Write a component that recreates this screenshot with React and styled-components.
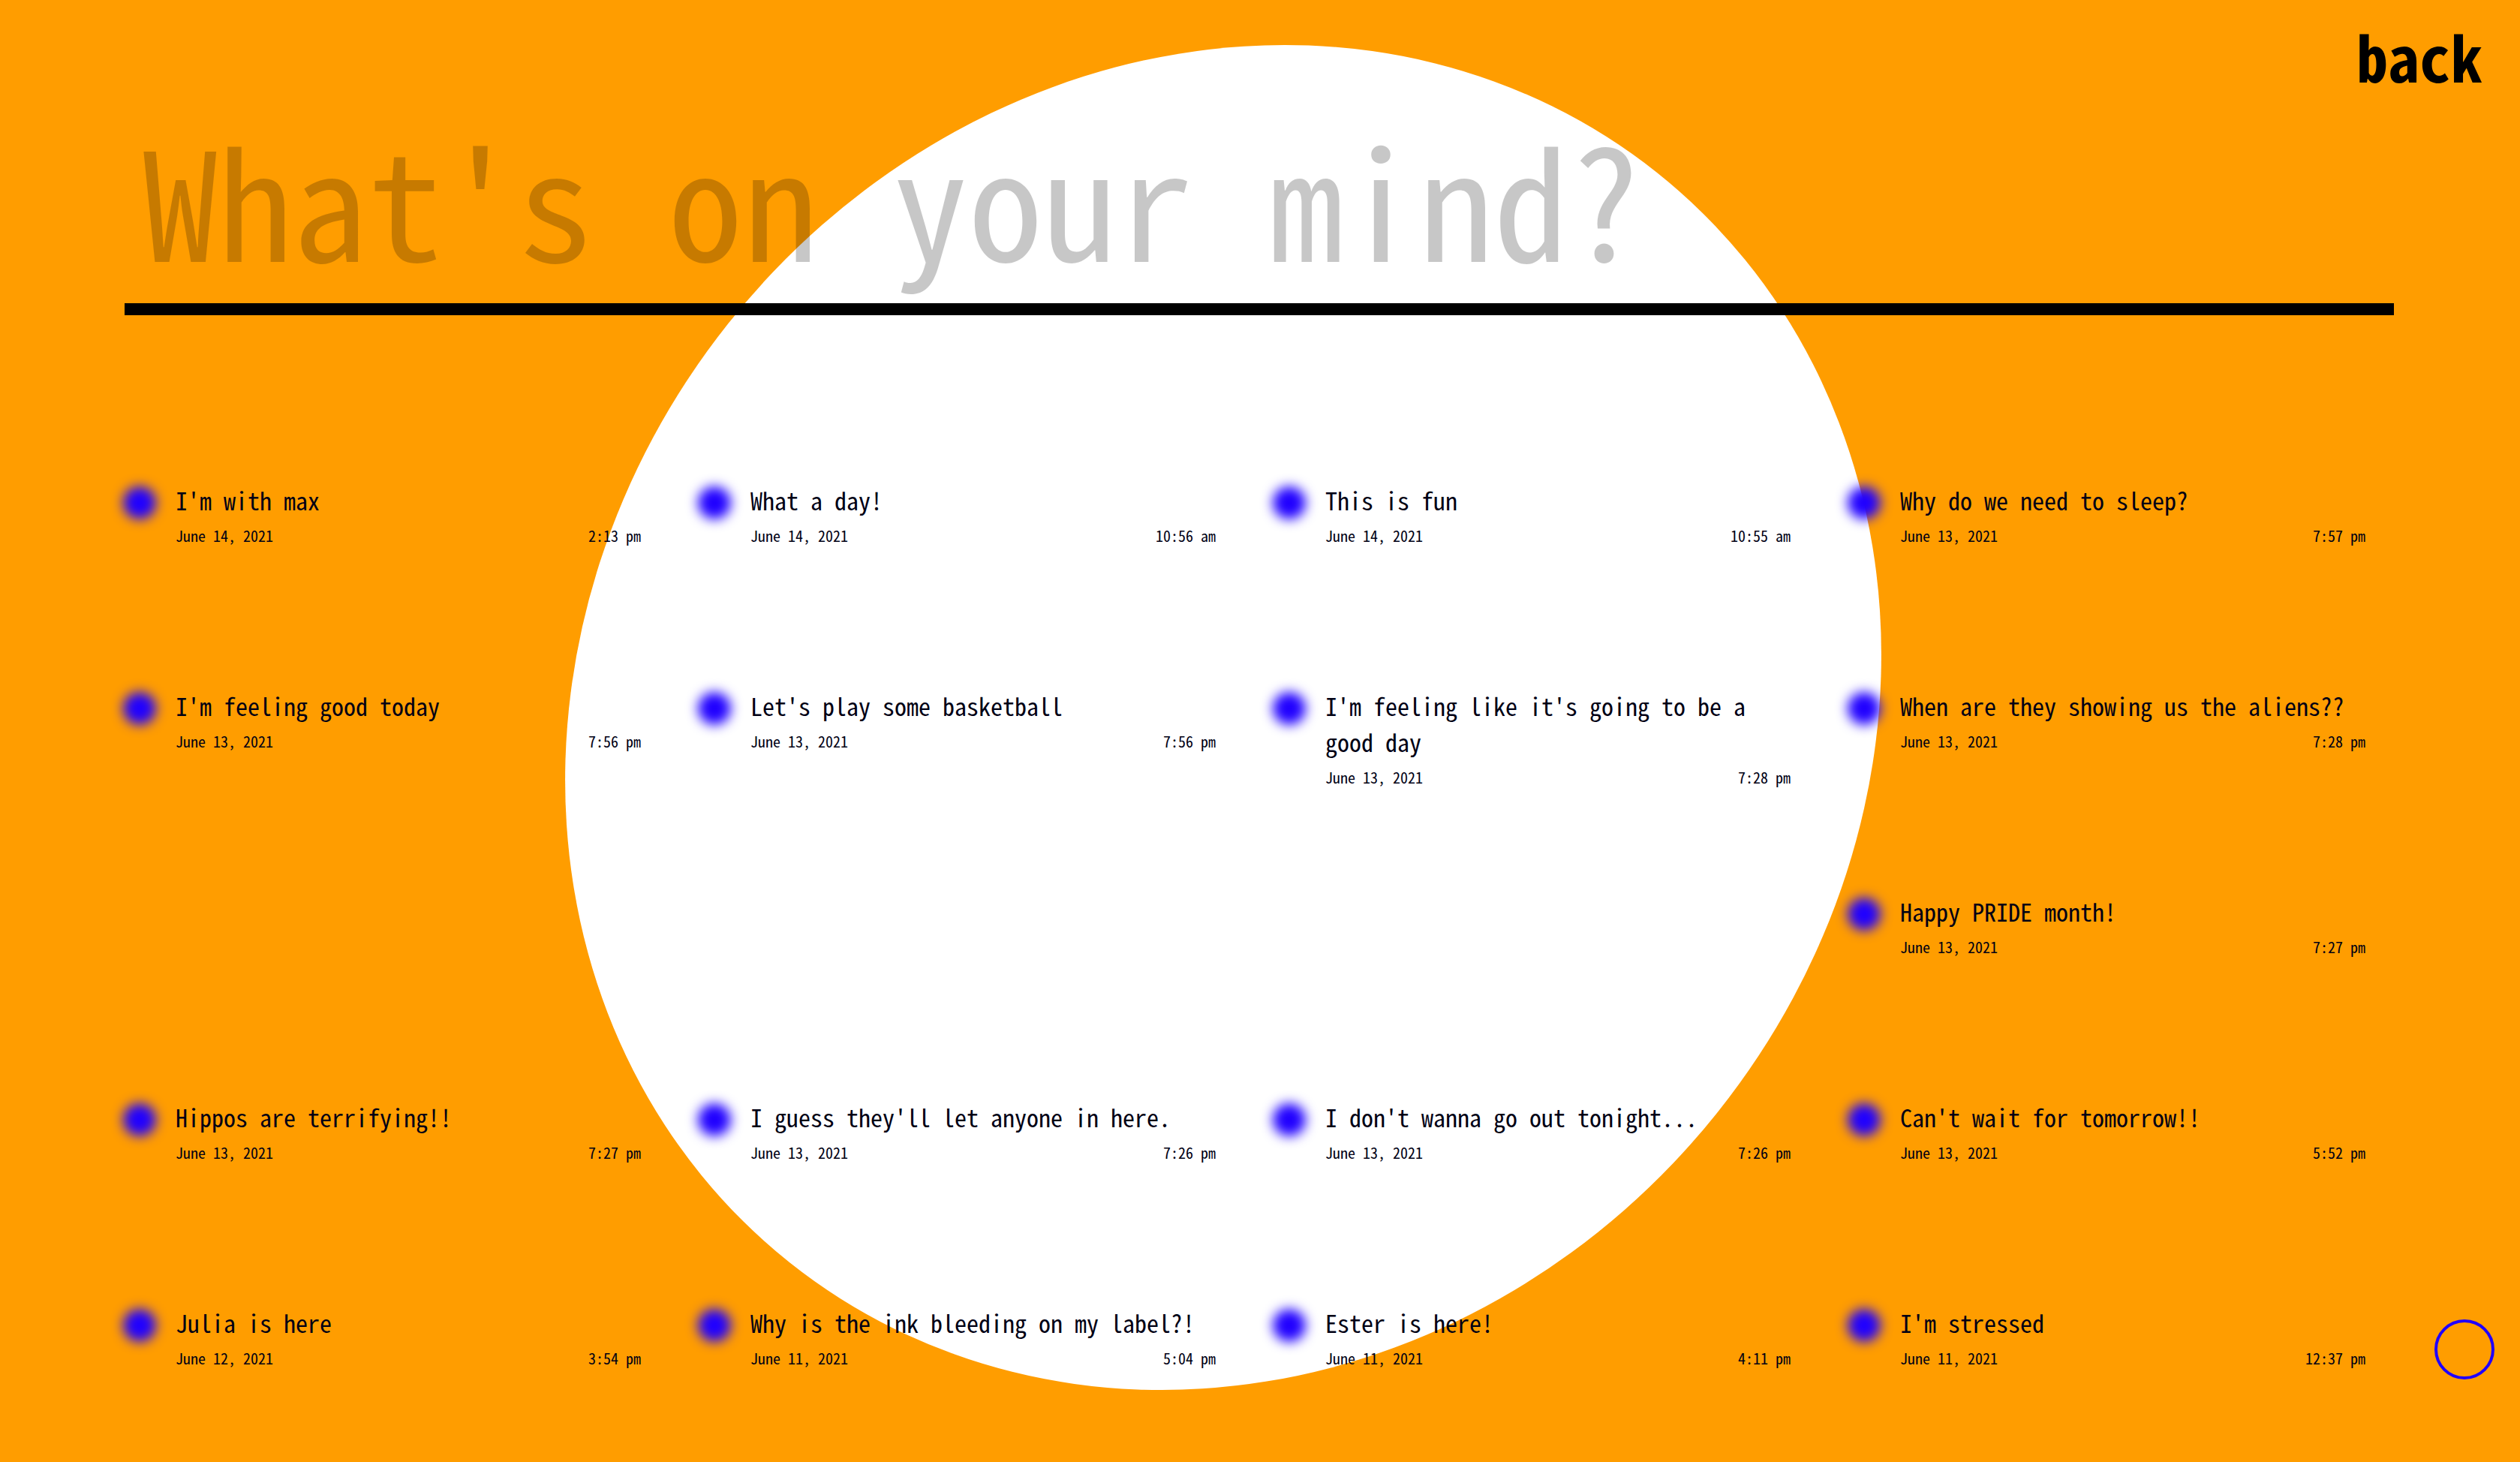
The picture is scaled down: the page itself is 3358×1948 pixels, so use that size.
import React from "react";
import styled, { createGlobalStyle } from "styled-components";

const mono = `"Noto Sans Mono CJK SC", "Liberation Mono", monospace`;

const GlobalStyle = createGlobalStyle`
  * { box-sizing: border-box; }
  body {
    margin: 0;
    background: #ff9d00;
    color: #000;
    font-family: ${mono};
  }
`;

const Page = styled.div`
  position: relative;
  min-height: 100vh;
  overflow: hidden;
  isolation: isolate;
`;

const Blob = styled.div`
  position: absolute;
  z-index: -1;
  left: calc(50% - 977px);
  top: 113px;
  width: 1856px;
  height: 1686px;
  border-radius: 50%;
  background: #fff;
  transform: rotate(-51.5deg);
`;

const Nav = styled.nav`
  display: flex;
  justify-content: flex-end;
  height: 164px;
  padding: 32px 50px 0;
`;

const BackLink = styled.a`
  color: #000;
  font-size: 84px;
  font-weight: 700;
  line-height: 84px;
  text-decoration: none;
`;

const Main = styled.main`
  padding: 0 168px 0 166px;
`;

const ThoughtInput = styled.input`
  display: block;
  width: 100%;
  height: 256px;
  padding: 0 24px 44px;
  border: 0;
  border-bottom: 16px solid #000;
  border-radius: 0;
  outline: 0;
  background: transparent;
  color: #000;
  font-family: ${mono};
  font-size: 200px;
  line-height: 196px;

  &::placeholder {
    color: rgba(0, 0, 0, 0.22);
    opacity: 1;
  }
`;

const Feed = styled.ul`
  display: grid;
  grid-template-columns: repeat(4, minmax(0, 1fr));
  grid-auto-rows: 96px;
  gap: 178px 78px;
  margin: 222px 0 0;
  padding: 0 38px 0 0;
  list-style: none;
`;

const Thought = styled.li`
  display: flex;
  align-items: flex-start;
  gap: 26px;
  grid-column-start: ${(p) => p.$column || "auto"};
`;

const Dot = styled.span`
  flex: none;
  width: 44px;
  height: 44px;
  margin: 6px 0 0 -2px;
  border-radius: 50%;
  background: #2000ff;
  filter: blur(8px);
`;

const Body = styled.div`
  flex: 1;
  min-width: 0;
  color: #000014;
  line-height: 48px;
`;

const Message = styled.p`
  margin: 0;
  font-size: 32px;
`;

const Meta = styled.div`
  display: flex;
  justify-content: space-between;
  font-size: 20px;
`;

const Cursor = styled.div`
  position: fixed;
  right: 34px;
  bottom: 110px;
  width: 80px;
  height: 80px;
  border: 4px solid #2000ff;
  border-radius: 50%;
  pointer-events: none;
`;

const thoughts = [
  { text: "I'm with max", date: "June 14, 2021", time: "2:13 pm" },
  { text: "What a day!", date: "June 14, 2021", time: "10:56 am" },
  { text: "This is fun", date: "June 14, 2021", time: "10:55 am" },
  { text: "Why do we need to sleep?", date: "June 13, 2021", time: "7:57 pm" },
  { text: "I'm feeling good today", date: "June 13, 2021", time: "7:56 pm" },
  { text: "Let's play some basketball", date: "June 13, 2021", time: "7:56 pm" },
  { text: "I'm feeling like it's going to be a good day", date: "June 13, 2021", time: "7:28 pm" },
  { text: "When are they showing us the aliens??", date: "June 13, 2021", time: "7:28 pm" },
  { text: "Happy PRIDE month!", date: "June 13, 2021", time: "7:27 pm", column: 4 },
  { text: "Hippos are terrifying!!", date: "June 13, 2021", time: "7:27 pm" },
  { text: "I guess they'll let anyone in here.", date: "June 13, 2021", time: "7:26 pm" },
  { text: "I don't wanna go out tonight...", date: "June 13, 2021", time: "7:26 pm" },
  { text: "Can't wait for tomorrow!!", date: "June 13, 2021", time: "5:52 pm" },
  { text: "Julia is here", date: "June 12, 2021", time: "3:54 pm" },
  { text: "Why is the ink bleeding on my label?!", date: "June 11, 2021", time: "5:04 pm" },
  { text: "Ester is here!", date: "June 11, 2021", time: "4:11 pm" },
  { text: "I'm stressed", date: "June 11, 2021", time: "12:37 pm" },
];

export default function App() {
  return (
    <Page>
      <GlobalStyle />
      <Blob />
      <Nav>
        <BackLink href="#">back</BackLink>
      </Nav>
      <Main>
        <ThoughtInput type="text" aria-label="What's on your mind?" placeholder="What's on your mind?" />
        <Feed>
          {thoughts.map((t) => (
            <Thought key={t.text} $column={t.column}>
              <Dot />
              <Body>
                <Message>{t.text}</Message>
                <Meta>
                  <span>{t.date}</span>
                  <time>{t.time}</time>
                </Meta>
              </Body>
            </Thought>
          ))}
        </Feed>
      </Main>
      <Cursor />
    </Page>
  );
}
